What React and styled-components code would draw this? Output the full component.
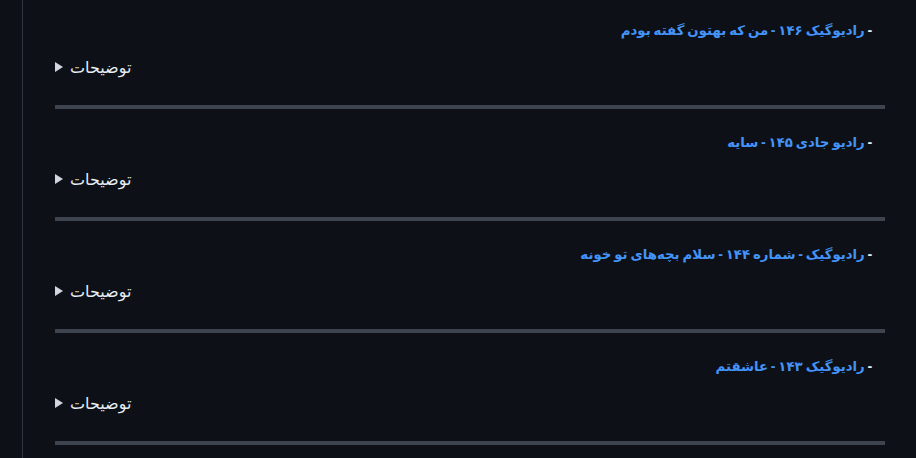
import React from "react";
import styled, { createGlobalStyle } from "styled-components";

const Global = createGlobalStyle`
  html, body { margin: 0; padding: 0; background: #0d1117; }
  body { font-family: "Noto Sans", "DejaVu Sans", sans-serif; color: #e6edf3; }
`;

const Page = styled.div`
  display: flex;
  min-height: 458px;
  background: #0d1117;
  overflow: hidden;
`;

const Gutter = styled.div`
  width: 22px;
  flex: none;
  border-right: 1px solid #30363d;
`;

const Content = styled.div`
  flex: 1;
  padding: 0 31px 0 32px;
`;

const Episode = styled.section`
  display: flex;
  flex-direction: column;
`;

const Title = styled.p`
  margin: 0;
  padding-top: ${(p) => (p.$first ? 19 : 22)}px;
  height: 22px;
  direction: rtl;
  text-align: right;
  padding-right: 13px;
  font-size: 13.3px;
  word-spacing: -0.5px;
  font-weight: 700;
  line-height: 22px;
  color: #e6edf3;
`;

const Link = styled.a`
  color: #4493f8;
  text-decoration: none;
`;

const Details = styled.details`
  margin-top: 15px;
  direction: ltr;
`;

const Summary = styled.summary`
  display: flex;
  align-items: center;
  gap: 7px;
  list-style: none;
  font-size: 16px;
  line-height: 22px;
  color: #e6edf3;
  cursor: pointer;
  &::-webkit-details-marker { display: none; }
`;

const Marker = styled.span`
  width: 0;
  height: 0;
  border-top: 5px solid transparent;
  border-bottom: 5px solid transparent;
  border-left: 8px solid #d1d7e0;
`;

const Rule = styled.hr`
  margin: 27px 0 0;
  height: 4px;
  border: 0;
  background: #3d444d;
`;

const episodes = [
  "رادیوگیک ۱۴۶ - من که بهتون گفته بودم",
  "رادیو جادی ۱۴۵ - سایه",
  "رادیوگیک - شماره ۱۴۴ - سلام بچه‌های تو خونه",
  "رادیوگیک ۱۴۳ - عاشقتم",
];

export default function App() {
  return (
    <>
      <Global />
      <Page>
        <Gutter />
        <Content>
          {episodes.map((t, i) => (
            <Episode key={t}>
              <Title $first={i === 0}>
                - <Link href="#">{t}</Link>
              </Title>
              <Details>
                <Summary>
                  <Marker />
                  <span>توضیحات</span>
                </Summary>
              </Details>
              <Rule />
            </Episode>
          ))}
        </Content>
      </Page>
    </>
  );
}
